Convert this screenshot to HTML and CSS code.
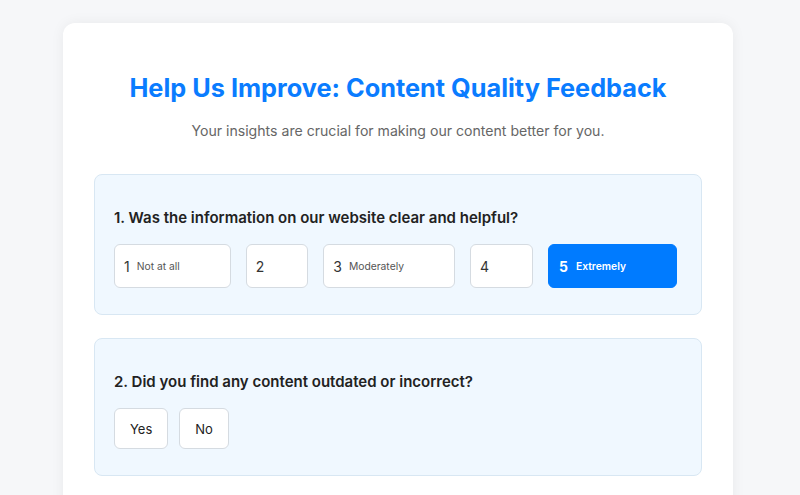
FILE: index.html
```html
<!DOCTYPE html>
<html lang="en">
<head>
    <meta charset="UTF-8">
    <meta name="viewport" content="width=device-width, initial-scale=1.0">
    <title>Content Quality Feedback</title>
    <link rel="stylesheet" href="styles.css">
</head>
<body>
    <div class="container">
        <h1>Help Us Improve: Content Quality Feedback</h1>
        <p class="subtitle">Your insights are crucial for making our content better for you.</p>

        <form id="feedbackForm">
            <div class="question">
                <h3>1. Was the information on our website clear and helpful?</h3>
                <div class="options">
                    <label class="option wide"><span class="num">1</span><span class="hint">Not at all</span></label>
                    <label class="option"><span class="num">2</span></label>
                    <label class="option wide"><span class="num">3</span><span class="hint">Moderately</span></label>
                    <label class="option"><span class="num">4</span></label>
                    <label class="option wide selected"><span class="num">5</span><span class="hint">Extremely</span></label>
                </div>
            </div>

            <div class="question">
                <h3>2. Did you find any content outdated or incorrect?</h3>
                <div class="choices">
                    <button type="button" class="choice">Yes</button>
                    <button type="button" class="choice">No</button>
                </div>
            </div>
        </form>
    </div>
</body>
</html>
```

FILE: styles.css
```css
body {
    font-family: Inter, "Open Sans", sans-serif;
    margin: 0;
    padding: 23px 4px 0 0;
    background-color: #f6f7f9;
}

.container {
    width: 608px;
    margin: 0 auto;
    padding: 40px 31px 40px;
    background-color: white;
    border-radius: 12px;
    box-shadow: 0 0 14px rgba(0,0,0,0.06);
}

h1 {
    margin: 0;
    text-align: center;
    font-size: 25.3px;
    line-height: 50px;
    font-weight: 700;
    color: #0a7cff;
}

.subtitle {
    margin: 7px 0 32px;
    text-align: center;
    font-size: 14.1px;
    line-height: 22px;
    color: #666;
}

.question {
    padding: 31px 19px 26px;
    background-color: #f0f8ff;
    border: 1px solid #d8e7f3;
    border-radius: 8px;
    margin-bottom: 23px;
}

.question h3 {
    margin: 0 0 14px;
    font-size: 15px;
    line-height: 24px;
    font-weight: 600;
    color: #222;
}

.options {
    display: flex;
    gap: 15px;
}

.option {
    display: flex;
    flex-shrink: 0;
    align-items: center;
    height: 42px;
    padding: 0 43px 0 9px;
    background-color: white;
    border: 1px solid #d5dbe1;
    border-radius: 6px;
    color: #333;
    white-space: nowrap;
    cursor: pointer;
}

.option.wide {
    padding-right: 50px;
}

.num {
    font-size: 14px;
}

.hint {
    margin-left: 7px;
    font-size: 10.3px;
    color: #555;
}

.option.selected {
    background-color: #007bff;
    border-color: #007bff;
    color: white;
}

.option.selected .num {
    font-weight: 700;
    margin-left: 1px;
}

.option.selected .hint {
    color: white;
    font-weight: 600;
    margin-left: 8px;
}

.choices {
    display: flex;
    gap: 11px;
}

.choice {
    height: 41px;
    padding: 0 15px;
    font-family: inherit;
    font-size: 13px;
    color: #222;
    background-color: white;
    border: 1px solid #d5dbe1;
    border-radius: 6px;
    cursor: pointer;
}
```
